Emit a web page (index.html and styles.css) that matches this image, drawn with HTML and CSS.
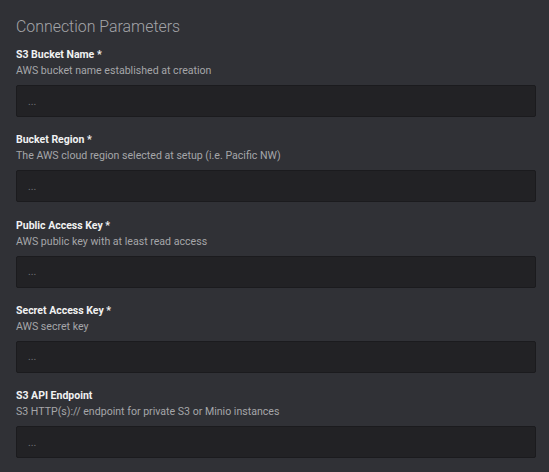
FILE: index.html
```html
<!DOCTYPE html>
<html>
<head>
<meta charset="utf-8">
<link rel="stylesheet" href="styles.css">
</head>
<body>
<div class="panel">
  <h2 class="title">Connection Parameters</h2>
  <div class="field">
    <div class="label">S3 Bucket Name *</div>
    <div class="desc">AWS bucket name established at creation</div>
    <input class="input" type="text" placeholder="...">
  </div>
  <div class="field">
    <div class="label">Bucket Region *</div>
    <div class="desc">The AWS cloud region selected at setup (i.e. Pacific NW)</div>
    <input class="input" type="text" placeholder="...">
  </div>
  <div class="field">
    <div class="label">Public Access Key *</div>
    <div class="desc">AWS public key with at least read access</div>
    <input class="input" type="text" placeholder="...">
  </div>
  <div class="field">
    <div class="label">Secret Access Key *</div>
    <div class="desc">AWS secret key</div>
    <input class="input" type="text" placeholder="...">
  </div>
  <div class="field">
    <div class="label">S3 API Endpoint</div>
    <div class="desc">S3 HTTP(s):// endpoint for private S3 or Minio instances</div>
    <input class="input" type="text" placeholder="...">
  </div>
</div>
</body>
</html>
```
FILE: styles.css
```css
html, body {
  margin: 0;
  padding: 0;
  background: #303136;
  font-family: Roboto, "Liberation Sans", sans-serif;
}
.panel {
  padding: 16px 13px 0 16px;
  display: flex;
  flex-direction: column;
}
.title {
  margin: 0;
  font-size: 15.9px;
  font-weight: 300;
  color: #a3a4a8;
  line-height: 21px;
}
.field {
  display: flex;
  flex-direction: column;
  margin-top: 10px;
}
.field + .field {
  margin-top: 15.25px;
}
.label {
  font-size: 10.5px;
  font-weight: 700;
  color: #f1f1f2;
  line-height: 16px;
}
.desc {
  font-size: 10.6px;
  color: #a5a6a9;
  line-height: 16px;
}
.input {
  margin: 6px 0 0 0;
  box-sizing: border-box;
  width: 520px;
  height: 32px;
  background: #222225;
  border: 1px solid #1b1b1e;
  border-radius: 2px;
  padding: 0 11px;
  font-family: Roboto, "Liberation Sans", sans-serif;
  font-size: 10.5px;
  color: #ddd;
  outline: none;
}
.input::placeholder {
  color: #717277;
}
```
